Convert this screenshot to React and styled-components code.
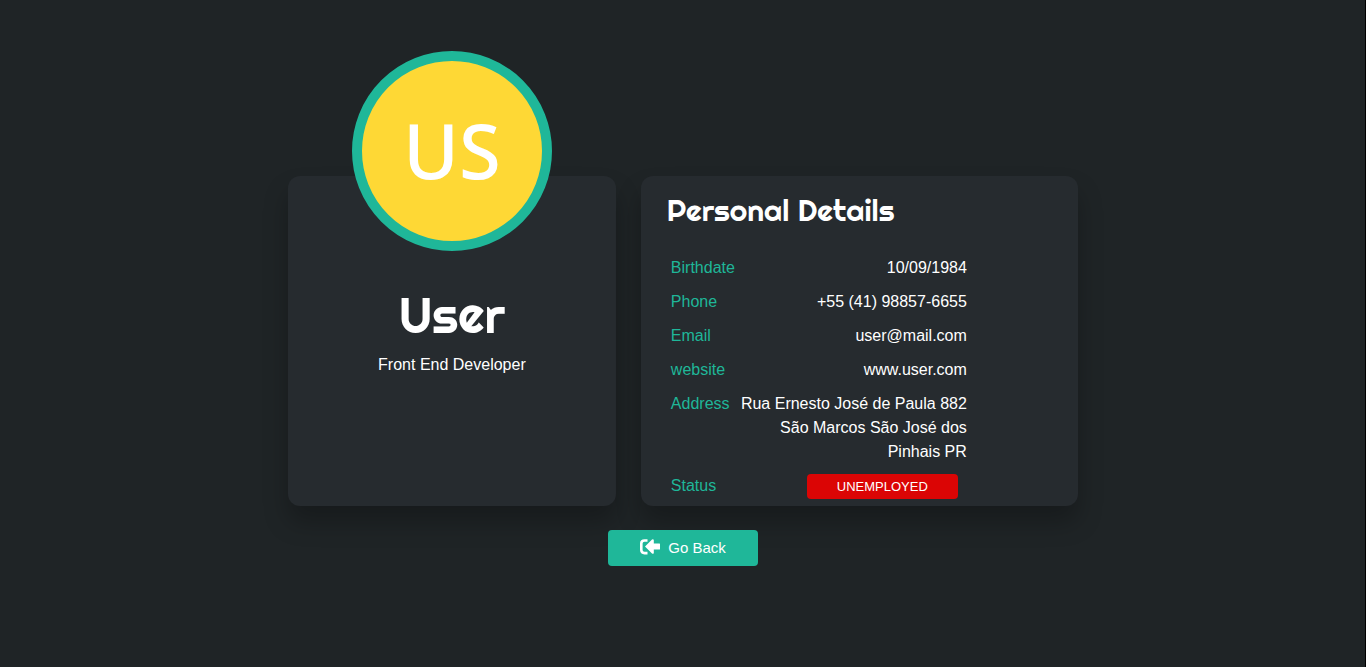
import React from 'react';
import styled, { createGlobalStyle } from 'styled-components';

const GlobalStyle = createGlobalStyle`
  *, *::before, *::after { box-sizing: border-box; }
  body {
    margin: 0;
    background: #1f2426;
    color: #fff;
    font: 16px/24px "Liberation Sans", Arial, sans-serif;
  }
  h1, h2, p, dl { margin: 0; }
`;

const Page = styled.main`
  display: flex;
  flex-direction: column;
  align-items: center;
  gap: 24px;
  min-height: 100vh;
  padding: 176px 24px 24px;
  box-shadow: inset -1px 0 #000;
`;

const Cards = styled.div`
  display: grid;
  grid-template-columns: 3fr 4fr;
  gap: 25px;
  width: 100%;
  max-width: 790px;
`;

const Card = styled.section`
  min-height: 330px;
  border-radius: 12px;
  background: #262b2f;
  box-shadow: 0 16px 24px rgba(0, 0, 0, 0.25);
`;

const ProfileCard = styled(Card)`
  display: flex;
  flex-direction: column;
  align-items: center;
`;

const Avatar = styled.div`
  display: flex;
  align-items: center;
  justify-content: center;
  width: 200px;
  height: 200px;
  margin-top: -125px;
  padding-bottom: 2px;
  border: 10px solid #1fb799;
  border-radius: 50%;
  background: #fed835;
  font: 500 76px/1 "Noto Sans", "Open Sans", sans-serif;
`;

const Name = styled.h1`
  margin-top: 34px;
  font: 400 50px/60px Righteous, Lato, sans-serif;
`;

const Role = styled.p`
  margin-top: 8px;
`;

const DetailsCard = styled(Card)`
  padding: 16px 26px 6px;
`;

const Title = styled.h2`
  font: 400 30px/36px Righteous, Lato, sans-serif;
`;

const Details = styled.dl`
  display: flex;
  flex-direction: column;
  gap: 10px;
  width: 296px;
  margin: 28px 0 0 4px;
`;

const Row = styled.div`
  display: flex;
  justify-content: space-between;
`;

const Label = styled.dt`
  color: #1fb799;
`;

const Value = styled.dd`
  max-width: 228px;
  margin: 0;
  text-align: right;
`;

const Status = styled(Value)`
  width: 151px;
  margin-right: 9px;
  border-radius: 4px;
  background: #db0505;
  font-size: 13px;
  line-height: 25px;
  text-align: center;
`;

const BackButton = styled.button`
  display: flex;
  align-items: center;
  justify-content: center;
  gap: 8px;
  width: 150px;
  height: 36px;
  padding: 0;
  border: 0;
  border-radius: 4px;
  background: #1fb799;
  color: #fff;
  font: 15px/24px "Liberation Sans", Arial, sans-serif;
  cursor: pointer;
`;

const details = [
  ['Birthdate', '10/09/1984'],
  ['Phone', '+55 (41) 98857-6655'],
  ['Email', 'user@mail.com'],
  ['website', 'www.user.com'],
  ['Address', 'Rua Ernesto José de Paula 882 São Marcos São José dos Pinhais PR'],
];

function BackIcon() {
  const arrow = 'M5 7.5L12 0.5Q13.4 -0.4 13.8 1V4.5H19.5Q20 4.5 20 5V10Q20 10.5 19.5 10.5H13.8V14Q13.4 15.4 12 14.5Z';
  return (
    <svg width="20" height="18" viewBox="0 0 20 18" aria-hidden="true">
      <path d="M7.5 1.5H4.5Q1.3 1.5 1.3 4.5V11Q1.3 14.1 4.5 14.1H7.5" fill="none" stroke="#fff" strokeWidth="2.6" />
      <path d={arrow} fill="#1fb799" stroke="#1fb799" strokeWidth="2" />
      <path d={arrow} fill="#fff" />
    </svg>
  );
}

export default function App() {
  return (
    <>
      <GlobalStyle />
      <Page>
        <Cards>
          <ProfileCard>
            <Avatar>US</Avatar>
            <Name>User</Name>
            <Role>Front End Developer</Role>
          </ProfileCard>
          <DetailsCard>
            <Title>Personal Details</Title>
            <Details>
              {details.map(([label, value]) => (
                <Row key={label}>
                  <Label>{label}</Label>
                  <Value>{value}</Value>
                </Row>
              ))}
              <Row>
                <Label>Status</Label>
                <Status>UNEMPLOYED</Status>
              </Row>
            </Details>
          </DetailsCard>
        </Cards>
        <BackButton type="button">
          <BackIcon />
          Go Back
        </BackButton>
      </Page>
    </>
  );
}
